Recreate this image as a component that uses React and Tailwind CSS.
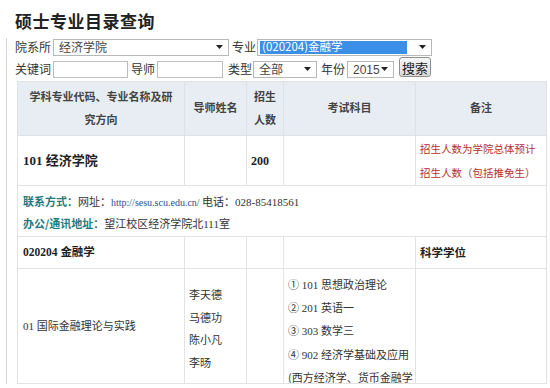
import React from 'react';

const cjk = "font-['Microsoft_YaHei','Noto_Sans_CJK_SC',sans-serif]";
const serif = "font-['Liberation_Serif','Noto_Sans_CJK_SC',serif]";

function Arrow() {
  return (
    <svg width="7" height="4" viewBox="0 0 7 4" className="shrink-0">
      <path d="M0 0h7L3.5 4z" fill="#222" />
    </svg>
  );
}

function FakeSelect({ width, value, highlighted }) {
  return (
    <div
      className="flex h-[17px] shrink-0 items-center border border-[#b8b8b8] bg-white pl-[2px] pr-[5px]"
      style={{ width }}
    >
      {highlighted ? (
        <div className="flex h-[13px] flex-1 items-center whitespace-nowrap bg-[#3c8fe6] pl-[2px] text-[11.5px] leading-none text-white">
          {value}
        </div>
      ) : (
        <div className="flex-1 whitespace-nowrap pl-[3px] text-[12px] leading-none text-[#444]">{value}</div>
      )}
      <div className={highlighted ? 'ml-[12px]' : ''}>
        <Arrow />
      </div>
    </div>
  );
}

function TextBox({ width }) {
  return <div className="h-[17px] shrink-0 border border-[#bdbdbd] bg-white" style={{ width }} />;
}

function Label({ width, ml, children }) {
  return (
    <span className="shrink-0 whitespace-nowrap" style={{ width, marginLeft: ml }}>
      {children}
    </span>
  );
}

export default function App() {
  return (
    <div className={`h-[388px] w-[550px] overflow-hidden bg-white ${cjk} text-[#333]`}>
      <div className="pl-[15px] pt-[10px] text-[17px] font-bold leading-[22px] tracking-[0.5px] text-[#222]">
        硕士专业目录查询
      </div>

      <div className="ml-[6px] mt-[6px] border-l border-[#d8d8d8] pl-[8px]">
        {/* query form */}
        <div className="flex h-[18px] items-center text-[12px]">
          <Label width={38}>院系所</Label>
          <FakeSelect width={176} value="经济学院" />
          <Label width={25} ml={3}>专业</Label>
          <FakeSelect width={175} value="(020204)金融学" highlighted />
        </div>
        <div className="mt-[4px] flex h-[18px] items-center text-[12px]">
          <Label width={38}>关键词</Label>
          <TextBox width={75} />
          <Label width={26} ml={3}>导师</Label>
          <TextBox width={66} />
          <Label width={25} ml={5}>类型</Label>
          <FakeSelect width={64} value="全部" />
          <Label width={26} ml={4}>年份</Label>
          <FakeSelect width={47} value={<span className="font-['Liberation_Sans',sans-serif] text-[12px]">2015</span>} />
          <button className="ml-[5px] -mt-[4px] h-[20px] w-[32px] shrink-0 rounded-[3px] border border-[#8f8f8f] bg-gradient-to-b from-[#f6f6f6] to-[#dcdcdc] text-[13px] leading-none text-[#222]">
            搜索
          </button>
        </div>

        {/* result table */}
        <table className={`ml-[2px] mt-[3px] w-[529px] table-fixed border-collapse text-[11px] ${serif}`}>
          <colgroup>
            <col className="w-[167px]" />
            <col className="w-[62px]" />
            <col className="w-[37px]" />
            <col className="w-[132px]" />
            <col className="w-[131px]" />
          </colgroup>
          <thead>
            <tr className="h-[54px] bg-[#e8edf3] text-[11px] leading-[23px] text-[#444]">
              <th className="border border-[#dde2e8] px-[10px] font-bold">学科专业代码、专业名称及研究方向</th>
              <th className="border border-[#dde2e8] font-bold">导师姓名</th>
              <th className="border border-[#dde2e8] px-[3px] font-bold">招生人数</th>
              <th className="border border-[#dde2e8] font-bold">考试科目</th>
              <th className="border border-[#dde2e8] font-bold">备注</th>
            </tr>
          </thead>
          <tbody>
            <tr className="h-[50px]">
              <td className="whitespace-nowrap border border-[#e3e3e3] pl-[5px] text-[13px] font-bold text-[#222]">101 经济学院</td>
              <td className="border border-[#e3e3e3]" />
              <td className="border border-[#e3e3e3] pl-[4px] text-[12px] font-bold text-[#222]">200</td>
              <td className="border border-[#e3e3e3]" />
              <td className={`whitespace-nowrap border border-[#e3e3e3] pl-[4px] text-[10.5px] leading-[24px] text-[#b8302b] ${cjk}`}>
                招生人数为学院总体预计
                <br />
                招生人数（包括推免生）
              </td>
            </tr>
            <tr className="h-[51px]">
              <td colSpan={5} className="whitespace-nowrap border border-[#e3e3e3] pl-[5px] align-top pt-[5px] text-[11px] leading-[21px] text-[#333]">
                <div>
                  <span className={`font-bold text-[#1f7a80] ${cjk}`}>联系方式</span>
                  <span className={cjk}>：网址：</span>
                  <span className="text-[10px] text-[#2c4f8c]">http://sesu.scu.edu.cn/</span>
                  <span className={cjk}> 电话：</span>
                  <span className="text-[11px]">028-85418561</span>
                </div>
                <div>
                  <span className={`font-bold text-[#1f7a80] ${cjk}`}>办公/通讯地址</span>
                  <span className={cjk}>：望江校区经济学院北</span>
                  <span>111</span>
                  <span className={cjk}>室</span>
                </div>
              </td>
            </tr>
            <tr className="h-[32px]">
              <td className="whitespace-nowrap border border-[#e3e3e3] pl-[5px] text-[11.5px] font-bold text-[#222]">020204 金融学</td>
              <td className="border border-[#e3e3e3]" />
              <td className="border border-[#e3e3e3]" />
              <td className="border border-[#e3e3e3]" />
              <td className={`border border-[#e3e3e3] pl-[4px] text-[11.5px] font-bold text-[#222] ${cjk}`}>科学学位</td>
            </tr>
            <tr>
              <td className="whitespace-nowrap border border-[#e3e3e3] pl-[5px] text-[11px] text-[#333]">
                01 <span className={cjk}>国际金融理论与实践</span>
              </td>
              <td className={`border border-[#e3e3e3] pl-[4px] pt-[4px] text-[11px] leading-[22.5px] text-[#333] ${cjk}`}>
                李天德<br />马德功<br />陈小凡<br />李旸
              </td>
              <td className="border border-[#e3e3e3]" />
              <td className="border border-[#e3e3e3] p-0 align-top">
                <div className="h-[114px] overflow-hidden whitespace-nowrap pl-[4px] pt-[4px] text-[11px] leading-[22.2px] text-[#333]">
                  <div>① 101 <span className={cjk}>思想政治理论</span></div>
                  <div>② 201 <span className={cjk}>英语一</span></div>
                  <div>③ 303 <span className={cjk}>数学三</span></div>
                  <div>④ 902 <span className={cjk}>经济学基础及应用</span></div>
                  <div className={cjk}>(西方经济学、货币金融学</div>
                </div>
              </td>
              <td className="border border-[#e3e3e3]" />
            </tr>
          </tbody>
        </table>
      </div>
    </div>
  );
}
